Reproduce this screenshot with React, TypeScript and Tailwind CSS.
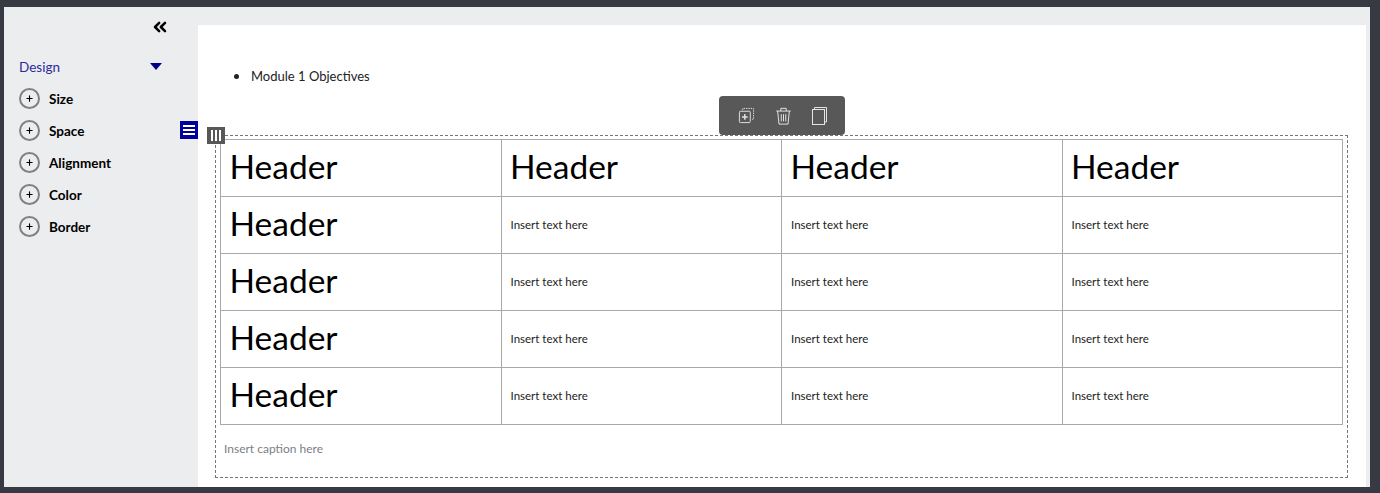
import { ChevronsLeft, Plus } from "lucide-react"

const designItems = ['Size', 'Space', 'Alignment', 'Color', 'Border']
const bodyFont = "font-['Lato','Noto_Sans',sans-serif]"

const DesignItem = ({ label }: { label: string }) => (
    <div className="flex h-8 items-center gap-[9px]">
        <div className="flex h-[21px] w-[21px] items-center justify-center rounded-full border-2 border-[#808080] text-black">
            <Plus className="h-[9px] w-[9px]" strokeWidth={3} />
        </div>
        <span className="pt-[2px] text-[13.5px] font-bold text-black">{label}</span>
    </div>
)

const Sidebar = () => (
    <aside className="flex w-[194px] shrink-0 flex-col pl-[15px]">
        <div className="flex justify-end pr-[28px] pt-[10px]">
            <ChevronsLeft className="h-[20px] w-[20px] text-black" strokeWidth={3} />
        </div>
        <div className="mt-[19px] flex h-5 items-center justify-between pr-[36px]">
            <span className="pt-[2px] text-[13.5px] text-[#2b2b9b]">Design</span>
            <div className="mt-[1px] h-0 w-0 border-x-[6.5px] border-t-[7px] border-x-transparent border-t-[#00008b]" />
        </div>
        <div className="mt-[6px] flex flex-col">
            {designItems.map(item => <DesignItem label={item} key={item} />)}
        </div>
    </aside>
)

const Toolbar = () => (
    <div className="absolute left-[521px] top-[71px] flex h-[39px] w-[126px] items-center justify-center gap-[20px] rounded-[4px] bg-[#585858] text-[#e4e4e4]">
        <svg viewBox="0 0 18 18" className="h-[17px] w-[17px]" fill="none" stroke="currentColor" strokeWidth="1">
            <path d="M5 3V1.5h11.5V13H15" strokeDasharray="1.5 1" />
            <rect x="1.5" y="4.5" width="11.5" height="12" rx="1" />
            <path d="M7.2 7.5v6M4.2 10.5h6" strokeWidth="1.5" />
        </svg>
        <svg viewBox="0 0 18 20" className="h-[18px] w-[17px]" fill="none" stroke="currentColor" strokeWidth="1.1">
            <path d="M1 4.5h16M6 4.5V1.5h6v3" />
            <path d="M2.5 4.5 4 19h10l1.5-14.5" />
            <path d="M6.5 8v8M9 8v8M11.5 8v8" />
        </svg>
        <svg viewBox="0 0 15 18" className="h-[18px] w-[15px]" fill="none" stroke="currentColor" strokeWidth="1">
            <rect x=".5" y="2.5" width="12" height="15" />
            <path d="M2.5 2.5V.5h12v14.5h-2" />
        </svg>
    </div>
)

const HeaderCell = () => (
    <td className="h-[57px] border border-[#a9a9a9] pb-[2px] pl-[8.5px] align-middle text-[33.5px] leading-none text-black font-['Lato',sans-serif]">Header</td>
)

const TextCell = () => (
    <td className="h-[57px] border border-[#a9a9a9] pl-[9px] align-middle text-[11.5px] text-[#222222]">Insert text here</td>
)

const ContentTable = () => (
    <table className="w-[1123px] table-fixed border-collapse">
        <tbody>
            {[0, 1, 2, 3, 4].map(row => (
                <tr key={row}>
                    <HeaderCell />
                    {[0, 1, 2].map(col => row === 0 ? <HeaderCell key={col} /> : <TextCell key={col} />)}
                </tr>
            ))}
        </tbody>
    </table>
)

const Editor = () => (
    <main className="relative mt-[18px] flex-1 bg-white pl-[17px] pr-[18px]">
        <ul className="list-disc pl-[36px] pt-[41px] text-[13px] leading-[18px] text-[#222222] marker:text-[16px]">
            <li>Module 1 Objectives</li>
        </ul>
        <Toolbar />
        <div className="absolute left-[-18px] top-[96px] flex h-[18px] w-[18px] flex-col justify-center gap-[2px] bg-[#00009c] px-[3px]">
            <div className="h-[2px] bg-white" />
            <div className="h-[2px] bg-white" />
            <div className="h-[2px] bg-white" />
        </div>
        <div className="absolute left-[9px] top-[102px] flex h-[17px] w-[18px] justify-center gap-[2px] border-2 border-[#585858] bg-[#585858] py-[1px]">
            <div className="w-[2px] bg-white" />
            <div className="w-[2px] bg-white" />
            <div className="w-[2px] bg-white" />
        </div>
        <div className="mt-[50px] h-[343px] border border-dashed border-[#777777] px-1 pt-[3px]">
            <ContentTable />
            <div className="pl-1 pt-[15px] text-[12px] text-[#7b8087]">Insert caption here</div>
        </div>
    </main>
)

export default function App() {
    return (
        <div className={`h-[493px] w-[1380px] overflow-hidden bg-[#373a43] pb-[6px] pl-1 pr-[10px] pt-[7px] ${bodyFont}`}>
            <div className="flex h-full bg-[#ecedef] pr-1">
                <Sidebar />
                <Editor />
            </div>
        </div>
    )
}
